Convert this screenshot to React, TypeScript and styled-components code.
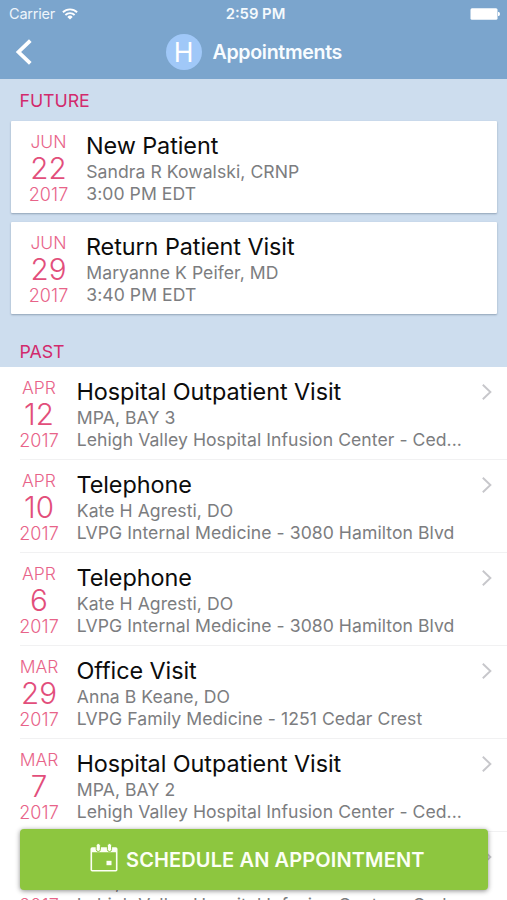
import React from 'react';
import styled, { createGlobalStyle } from 'styled-components';

const GlobalStyle = createGlobalStyle`
  * { box-sizing: border-box; }
  body {
    margin: 0;
    background: #fff;
    font-family: Inter, "Liberation Sans", sans-serif;
  }
`;

const Screen = styled.main`
  position: relative;
  display: flex;
  flex-direction: column;
  width: 507px;
  height: 900px;
  overflow: hidden;
  background: #fff;
`;

const Header = styled.header`
  flex: none;
  height: 79px;
  background: #7ba5cd;
  color: #fff;
`;

const StatusBar = styled.div`
  display: grid;
  grid-template-columns: 1fr auto 1fr;
  align-items: center;
  height: 27px;
  padding: 0 7px 0 9px;
`;

const Carrier = styled.div`
  display: flex;
  align-items: center;
  gap: 6.5px;
  font-size: 14.5px;
  letter-spacing: -0.2px;
  color: #eef5fb;
`;

const Clock = styled.div`
  padding-left: 2px;
  font-size: 14.8px;
  font-weight: 600;
  color: #f5fafd;
`;

const BatteryIcon = styled.svg`
  justify-self: end;
`;

const NavBar = styled.div`
  display: grid;
  grid-template-columns: 165.5px 1fr;
  align-items: center;
  height: 50px;
`;

const BackButton = styled.button`
  display: flex;
  padding: 0 0 0 15px;
  border: 0;
  background: none;
  color: inherit;
`;

const TitleGroup = styled.div`
  display: flex;
  align-items: center;
  gap: 11px;
`;

const Avatar = styled.span`
  display: flex;
  align-items: center;
  justify-content: center;
  width: 36px;
  height: 36px;
  border-radius: 50%;
  background: #a0c8f8;
  font-size: 26.5px;
  line-height: 36px;
`;

const PageTitle = styled.h1`
  margin: 0;
  font-size: 19.6px;
  font-weight: 600;
  letter-spacing: -0.32px;
  line-height: 26px;
  color: #f8fcff;
`;

const FutureSection = styled.section`
  flex: none;
  display: flex;
  flex-direction: column;
  height: 288px;
  background: #cdddee;
`;

const SectionLabel = styled.h2<{ $top: number }>`
  margin: ${(p) => p.$top}px 0 0 19.6px;
  font-size: 17.8px;
  font-weight: 400;
  letter-spacing: -0.1px;
  line-height: 22px;
  color: #d22a6c;
`;

const CardList = styled.div`
  display: flex;
  flex-direction: column;
  gap: 9.8px;
  margin: 9.5px 10px 0 10.7px;
`;

const Card = styled.article`
  display: flex;
  gap: 17.7px;
  height: 91.6px;
  padding: 10px 0 0 18.3px;
  border-radius: 1px;
  background: #fff;
  box-shadow: 0 1px 2px rgba(60, 80, 105, 0.42);
`;

const PastList = styled.section`
  flex: none;
  padding: 0.3px 0 0 19.5px;
`;

const Row = styled.article`
  display: flex;
  gap: 17.7px;
  height: 92.9px;
  padding: 10px 14.5px 0 0;
  border-bottom: 1.5px solid #f1f1f2;
`;

const DateColumn = styled.div`
  display: flex;
  flex: none;
  flex-direction: column;
  align-items: center;
  width: 39px;
  color: #e86389;
  font-weight: 300;
`;

const Month = styled.span`
  font-size: 17.5px;
  line-height: 22px;
`;

const Day = styled.span`
  font-size: 29.6px;
  line-height: 31px;
  color: #e24e7b;
`;

const Year = styled.span`
  font-size: 18px;
  line-height: 22px;
  letter-spacing: 0.1px;
`;

const Details = styled.div`
  flex: 1;
  min-width: 0;
  padding: 0.9px 0 0 0.6px;
  color: #7c7d80;
  font-size: 17.6px;
  letter-spacing: 0.05px;
  line-height: 22px;
  white-space: nowrap;
`;

const VisitTitle = styled.h3`
  margin: 0 0 1px -0.3px;
  font-size: 23.4px;
  font-weight: 400;
  letter-spacing: -0.07px;
  line-height: 28px;
  color: #0c0c0c;
`;

const RowChevron = styled.svg`
  flex: none;
  margin-top: 6px;
`;

const ScheduleButton = styled.button`
  position: absolute;
  left: 20px;
  right: 19px;
  bottom: 10px;
  display: flex;
  align-items: center;
  gap: 8px;
  height: 61.5px;
  padding: 0 0 0 70px;
  border: 0;
  border-radius: 4px;
  background: #8dc63f;
  box-shadow: 0 1px 5px rgba(0, 0, 0, 0.45);
  color: #fcfff5;
  font-family: inherit;
  font-size: 20px;
  font-weight: 600;
  letter-spacing: 0.12px;
  white-space: nowrap;
`;

const ButtonLabel = styled.span`
  padding-top: 2px;
`;

type Visit = { date: [string, string, string]; title: string; lines: [string, string] };

const future: Visit[] = [
  { date: ['JUN', '22', '2017'], title: 'New Patient', lines: ['Sandra R Kowalski, CRNP', '3:00 PM EDT'] },
  { date: ['JUN', '29', '2017'], title: 'Return Patient Visit', lines: ['Maryanne K Peifer, MD', '3:40 PM EDT'] },
];

const past: Visit[] = [
  { date: ['APR', '12', '2017'], title: 'Hospital Outpatient Visit', lines: ['MPA, BAY 3', 'Lehigh Valley Hospital Infusion Center - Ced...'] },
  { date: ['APR', '10', '2017'], title: 'Telephone', lines: ['Kate H Agresti, DO', 'LVPG Internal Medicine - 3080 Hamilton Blvd'] },
  { date: ['APR', '6', '2017'], title: 'Telephone', lines: ['Kate H Agresti, DO', 'LVPG Internal Medicine - 3080 Hamilton Blvd'] },
  { date: ['MAR', '29', '2017'], title: 'Office Visit', lines: ['Anna B Keane, DO', 'LVPG Family Medicine - 1251 Cedar Crest'] },
  { date: ['MAR', '7', '2017'], title: 'Hospital Outpatient Visit', lines: ['MPA, BAY 2', 'Lehigh Valley Hospital Infusion Center - Ced...'] },
  { date: ['MAR', '6', '2017'], title: 'Hospital Outpatient Visit', lines: ['MPA, BAY 2', 'Lehigh Valley Hospital Infusion Center - Ced...'] },
];

function VisitContent({ visit }: { visit: Visit }) {
  const [month, day, year] = visit.date;
  return (
    <>
      <DateColumn>
        <Month>{month}</Month>
        <Day>{day}</Day>
        <Year>{year}</Year>
      </DateColumn>
      <Details>
        <VisitTitle>{visit.title}</VisitTitle>
        <div>{visit.lines[0]}</div>
        <div>{visit.lines[1]}</div>
      </Details>
    </>
  );
}

function WifiIcon() {
  return (
    <svg width="16" height="12" viewBox="0 0 16 12" fill="none" stroke="#fff" strokeWidth="1.9">
      <path d="M0.9 4.3a10.2 10.2 0 0 1 14.2 0" />
      <path d="M3.4 7a6.6 6.6 0 0 1 9.2 0" />
      <path d="M8 11.6 5.3 8.9a3.9 3.9 0 0 1 5.4 0Z" fill="#fff" stroke="none" />
    </svg>
  );
}

function CalendarIcon() {
  return (
    <svg width="28" height="32" viewBox="0 0 28 32">
      <path
        fill="#fcfff5"
        fillRule="evenodd"
        d="M2.2 4.2H25.8A1.7 1.7 0 0 1 27.5 5.9V26.8A1.7 1.7 0 0 1 25.8 28.5H2.2A1.7 1.7 0 0 1 .5 26.8V5.9A1.700 1.700 0 0 1 2.2 4.2ZM2.1 9.300V27H25.900V9.300Z"
      />
      <rect x="6.200" y=".5" width="4.200" height="8" rx="2.100" fill="#fcfff5" stroke="#8dc63f" strokeWidth="1" />
      <rect x="17.400" y=".5" width="4.200" height="8" rx="2.100" fill="#fcfff5" stroke="#8dc63f" strokeWidth="1" />
      <rect x="16.500" y="17.800" width="5" height="4.400" fill="#fcfff5" />
    </svg>
  );
}

export default function App() {
  return (
    <Screen>
      <GlobalStyle />
      <Header>
        <StatusBar>
          <Carrier>
            Carrier
            <WifiIcon />
          </Carrier>
          <Clock>2:59 PM</Clock>
          <BatteryIcon width="30" height="12" viewBox="0 0 30 12" fill="#fff">
            <rect x="0.5" y="0.3" width="27" height="11.4" rx="1.5" />
            <path d="M28 4h.6a1.4 2 0 0 1 0 4H28Z" />
          </BatteryIcon>
        </StatusBar>
        <NavBar>
          <BackButton aria-label="Back">
            <svg width="18" height="26" viewBox="0 0 18 26" fill="none" stroke="#fff" strokeWidth="3.8">
              <path d="M15.3 1.7 3.5 13 15.3 24.3" />
            </svg>
          </BackButton>
          <TitleGroup>
            <Avatar>H</Avatar>
            <PageTitle>Appointments</PageTitle>
          </TitleGroup>
        </NavBar>
      </Header>
      <FutureSection>
        <SectionLabel $top={10.5}>FUTURE</SectionLabel>
        <CardList>
          {future.map((v, i) => (
            <Card key={i}>
              <VisitContent visit={v} />
            </Card>
          ))}
        </CardList>
        <SectionLabel $top={27}>PAST</SectionLabel>
      </FutureSection>
      <PastList>
        {past.map((v, i) => (
          <Row key={i}>
            <VisitContent visit={v} />
            <RowChevron width="12" height="18" viewBox="0 0 12 18" fill="none" stroke="#c7c7cb" strokeWidth="1.9">
              <path d="M1.8 1.8 9.4 9 1.8 16.2" />
            </RowChevron>
          </Row>
        ))}
      </PastList>
      <ScheduleButton>
        <CalendarIcon />
        <ButtonLabel>SCHEDULE AN APPOINTMENT</ButtonLabel>
      </ScheduleButton>
    </Screen>
  );
}
